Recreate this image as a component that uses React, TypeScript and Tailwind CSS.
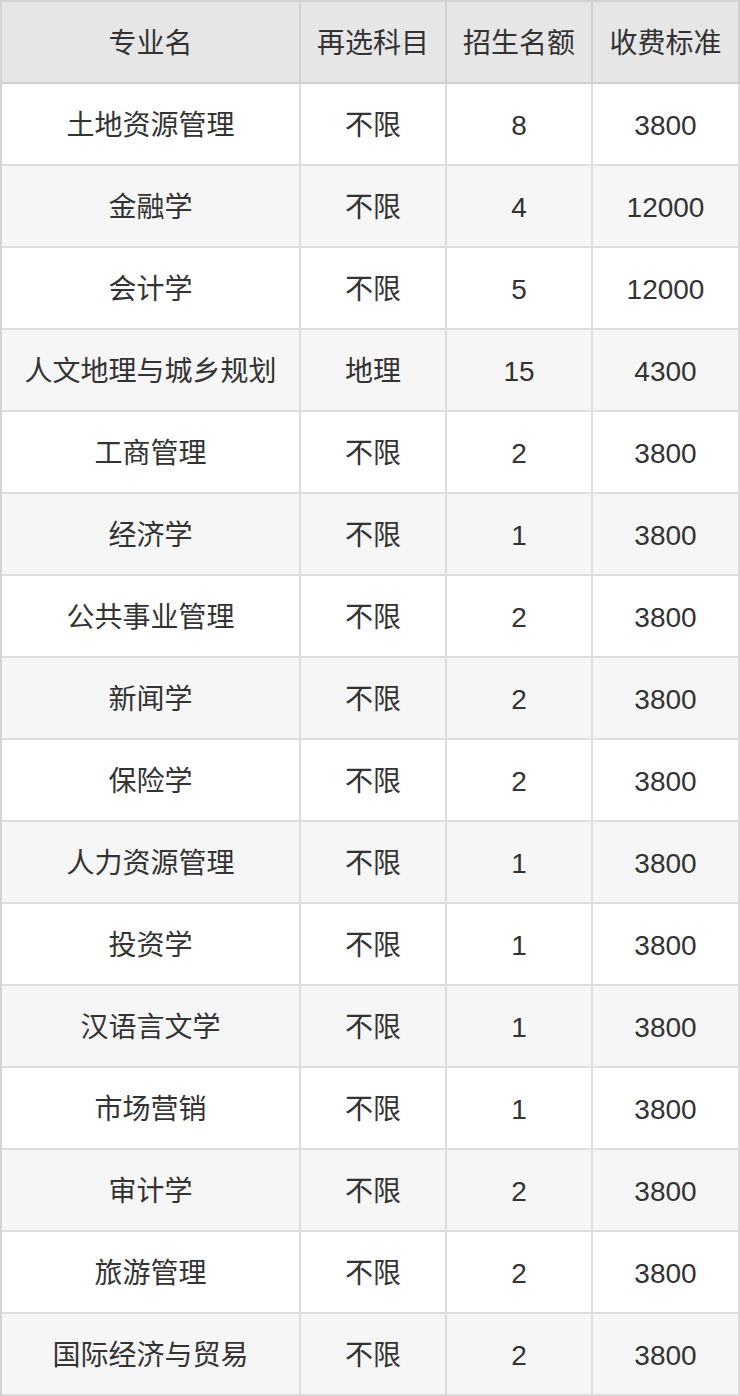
const ROWS: readonly [string, string, string, string][] = [
  ["土地资源管理", "不限", "8", "3800"],
  ["金融学", "不限", "4", "12000"],
  ["会计学", "不限", "5", "12000"],
  ["人文地理与城乡规划", "地理", "15", "4300"],
  ["工商管理", "不限", "2", "3800"],
  ["经济学", "不限", "1", "3800"],
  ["公共事业管理", "不限", "2", "3800"],
  ["新闻学", "不限", "2", "3800"],
  ["保险学", "不限", "2", "3800"],
  ["人力资源管理", "不限", "1", "3800"],
  ["投资学", "不限", "1", "3800"],
  ["汉语言文学", "不限", "1", "3800"],
  ["市场营销", "不限", "1", "3800"],
  ["审计学", "不限", "2", "3800"],
  ["旅游管理", "不限", "2", "3800"],
  ["国际经济与贸易", "不限", "2", "3800"],
];

const HEADERS = ["专业名", "再选科目", "招生名额", "收费标准"];

const GRID = "grid grid-cols-[299px_146px_146px_147px]";

export default function App() {
  return (
    <div
      className="w-[740px] bg-white text-[28px] text-[#333333]"
      style={{ fontFamily: '"Liberation Sans", "Noto Sans CJK SC", sans-serif' }}
    >
      <div className="border-t-2 border-l-2 border-[#d4d4d4]">
        <div className={`${GRID} h-[82px] bg-[#e6e6e6]`}>
          {HEADERS.map((h) => (
            <div
              key={h}
              className="flex items-center justify-center border-r-2 border-b-2 border-[#d0d0d0] pt-1"
            >
              {h}
            </div>
          ))}
        </div>
        {ROWS.map((row, i) => (
          <div
            key={row[0]}
            className={`${GRID} h-[82px] ${i % 2 === 1 ? "bg-[#f6f6f6]" : "bg-white"}`}
          >
            {row.map((cell, j) => (
              <div
                key={j}
                className="flex items-center justify-center border-r-2 border-b-2 border-[#dedede] pt-1"
              >
                {cell}
              </div>
            ))}
          </div>
        ))}
      </div>
    </div>
  );
}
